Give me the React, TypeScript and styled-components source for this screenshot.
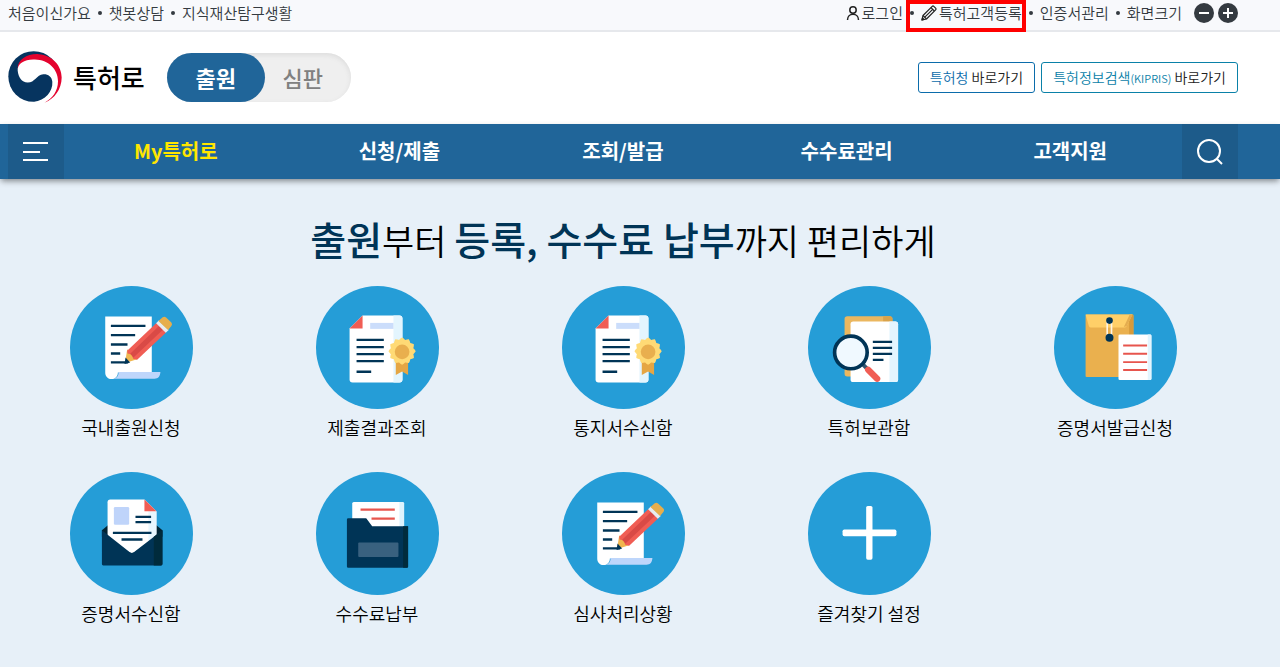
import React from "react";
import styled, { createGlobalStyle } from "styled-components";

const GlobalStyle = createGlobalStyle`
  *, *::before, *::after { box-sizing: border-box; }
  body {
    margin: 0;
    background: #fff;
    color: #111;
    font-family: "Noto Sans CJK KR", "Noto Sans", sans-serif;
  }
  ul { list-style: none; margin: 0; padding: 0; }
  a { color: inherit; text-decoration: none; }
  button { font-family: inherit; border: 0; padding: 0; cursor: pointer; }
  svg { display: block; flex: none; }
`;

const Container = styled.div`
  margin: 0 42px 0 8px;
  display: flex;
  align-items: center;
  justify-content: space-between;
`;

const TopBar = styled.div`
  background: #f8f9fc;
  border-bottom: 2px solid #e6e8ec;
`;

const TopRow = styled(Container)`
  height: 30px;
  padding-bottom: 4px;
  font-size: 15px;
  font-weight: 350;
  line-height: 24px;
  color: #343a40;
`;

const LinkList = styled.ul`
  display: flex;
  align-items: center;
`;

const LinkItem = styled.li`
  display: flex;
  align-items: center;
  white-space: nowrap;
  & + &::before {
    content: "";
    width: 4px;
    height: 4px;
    margin: 0 7px;
    border-radius: 50%;
    background: #343a40;
  }
`;

const TopLink = styled.a<{ $marked?: boolean }>`
  position: relative;
  display: flex;
  align-items: center;
  gap: 2px;
  ${(p) =>
    p.$marked &&
    `&::after {
      content: "";
      position: absolute;
      inset: -1px -4px -7px -15px;
      border: 4px solid #f00;
    }`}
`;

const SizeButtons = styled.div`
  display: flex;
  gap: 4px;
  margin-left: 12px;
`;

const RoundButton = styled.button`
  width: 20px;
  height: 20px;
  border-radius: 50%;
  background: #343a40;
  display: grid;
  place-items: center;
`;

const HeaderRow = styled(Container)`
  height: 92px;
  padding-bottom: 2px;
`;

const Brand = styled.div`
  display: flex;
  align-items: center;
`;

const LogoLink = styled.a`
  display: flex;
  align-items: center;
  gap: 11px;
  font-size: 26px;
  line-height: 36px;
  font-weight: 500;
  color: #000;
`;

const Toggle = styled.div`
  display: flex;
  margin-left: 22px;
  border-radius: 25px;
  background: #efefef;
  box-shadow: inset 0 2px 5px #dcdcdc;
`;

const ToggleButton = styled.button<{ $active?: boolean }>`
  width: ${(p) => (p.$active ? 98 : 86)}px;
  height: 49px;
  padding-right: ${(p) => (p.$active ? 0 : 10)}px;
  border-radius: 25px;
  font-size: 22px;
  line-height: 32px;
  font-weight: ${(p) => (p.$active ? 700 : 500)};
  color: ${(p) => (p.$active ? "#fff" : "#808080")};
  background: ${(p) => (p.$active ? "#206599" : "transparent")};
`;

const Shortcuts = styled.div`
  display: flex;
  gap: 6px;
`;

const Shortcut = styled.a<{ $color: string }>`
  height: 31px;
  padding: 0 11px;
  border: 1px solid ${(p) => p.$color};
  border-radius: 3px;
  font-size: 14px;
  line-height: 28px;
  font-weight: 350;
  color: #222;
  white-space: nowrap;
  span { color: ${(p) => p.$color}; }
  small { font-size: 11px; }
`;

const NavBar = styled.nav`
  position: relative;
  background: #206599;
  box-shadow: 0 3px 6px -1px rgba(0, 0, 0, 0.45);
`;

const NavRow = styled(Container)`
  height: 55px;
`;

const NavButton = styled.button`
  width: 56px;
  height: 55px;
  background: #1d5b8a;
  display: grid;
  place-items: center;
`;

const Menu = styled.ul`
  flex: 1;
  display: grid;
  grid-template-columns: repeat(5, 1fr);
  padding-bottom: 2px;
  text-align: center;
  font-size: 20px;
  line-height: 32px;
  font-weight: 700;
`;

const MenuLink = styled.a<{ $current?: boolean }>`
  color: ${(p) => (p.$current ? "#ffe600" : "#fff")};
`;

const Hero = styled.main`
  background: #e7f0f8;
  padding: 31px 42px 38px 8px;
`;

const Title = styled.h1`
  margin: 0 0 18px;
  text-align: center;
  font-size: 35px;
  line-height: 56px;
  font-weight: 350;
  color: #000;
  strong {
    font-size: 39px;
    font-weight: 500;
    color: #003456;
  }
`;

const Services = styled.ul`
  display: grid;
  grid-template-columns: repeat(5, 1fr);
  row-gap: 29px;
`;

const ServiceLink = styled.a`
  display: flex;
  flex-direction: column;
  align-items: center;
  gap: 2px;
  font-size: 18px;
  line-height: 32px;
  font-weight: 350;
  color: #000;
`;

const Circle = styled.span`
  width: 123px;
  height: 123px;
  border-radius: 50%;
  background: #259dd7;
`;

const Art = ({ children, top = 28 }: { children: React.ReactNode; top?: number }) => (
  <svg width="123" height="123" viewBox={`28 ${top} 370 370`} aria-hidden="true">
    {children}
  </svg>
);

const WriteIcon = () => (
  <Art>
    <path d="M134 120h140v168H172c0 12-8 20-19 20s-19-8-19-20z" fill="#fff" />
    <path d="M174 287h126c-1 13-6 20-18 20H160c10-3 15-10 14-20z" fill="#bed6fb" />
    <path d="M151 148h104M151 176h73M151 204h50M151 231h28M151 258h52" stroke="#003456" strokeWidth="7" />
    <path d="M200 218l17 17 13 13-36 12z" fill="#f0b64f" />
    <path d="M195 243l14 15-17 5z" fill="#003456" />
    <path d="M200 223l88-84 29 29-87 82-12-3-4-13-13-3z" fill="#f05d54" />
    <path d="M209 232l89-86 11 12-90 85z" fill="#d94a46" />
    <path d="M287 140l8-8 30 28-9 9z" fill="#e7ecef" />
    <path d="M294 133l13-11q5-4 10 1l16 15q4 5 0 10l-10 12z" fill="#e6ae4c" />
  </Art>
);

const sealPoints = Array.from({ length: 48 }, (_, i) => {
  const angle = (i * Math.PI) / 24;
  const radius = 38 + 3 * Math.cos(angle * 12);
  return `${(287 + radius * Math.cos(angle)).toFixed(1)},${(224 + radius * Math.sin(angle)).toFixed(1)}`;
}).join(" ");

const CertificateIcon = () => (
  <Art>
    <path d="M168 117h111q9 0 9 9v183q0 9-9 9H138q-9 0-9-9V156z" fill="#fff" />
    <path d="M261 117h18q9 0 9 9v183q0 9-9 9h-18z" fill="#e3f5fe" />
    <path d="M168 117v39h-39z" fill="#f05d54" />
    <path d="M191 139h70v18h-70z" fill="#cbddfb" />
    <path d="M150 190h82M150 212h82M150 233h82M150 254h82M150 286h44" stroke="#003456" strokeWidth="7" />
    <path d="M268 255h37v41l-18-11-19 11z" fill="#e5a644" />
    <polygon points={sealPoints} fill="#ffda75" />
    <circle cx="287" cy="226" r="22" fill="#e9af4e" />
  </Art>
);

const SearchDocIcon = () => (
  <Art>
    <rect x="138" y="119" width="144" height="181" rx="8" fill="#ebb75f" />
    <path d="M254 119h20q8 0 8 8v20h-28z" fill="#d9a34a" />
    <rect x="156" y="135" width="143" height="182" rx="8" fill="#fff" />
    <path d="M273 135h18q8 0 8 8v166q0 8-8 8h-18z" fill="#e3f5fe" />
    <path d="M223 196h58M223 214h58M223 232h58M223 250h32" stroke="#003456" strokeWidth="7" />
    <path d="M192 263l16 16" stroke="#34566f" strokeWidth="12" />
    <path d="M209 280l27 27" stroke="#f05d54" strokeWidth="19" strokeLinecap="round" />
    <circle cx="157" cy="228" r="49" fill="#f0f9ff" stroke="#003456" strokeWidth="11" />
  </Art>
);

const EnvelopeIcon = () => (
  <Art>
    <rect x="123" y="114" width="144" height="188" rx="3" fill="#eab04e" />
    <path d="M254 114h10q3 0 3 3v70h-13z" fill="#d69a3b" />
    <path d="M123 114h141l-18 36q-2 3-6 3H139q-4 0-6-4z" fill="#ffcf68" />
    <path d="M246 149l18-34h-9l-17 36z" fill="#e4ac4f" />
    <path d="M188 134v48M201 134v48" stroke="#fff5e4" strokeWidth="5" />
    <circle cx="195" cy="132" r="10" fill="#003456" />
    <circle cx="195" cy="184" r="12" fill="#003456" />
    <rect x="222" y="174" width="99" height="137" rx="4" fill="#fff" />
    <path d="M310 174h7q4 0 4 4v129q0 4-4 4h-7z" fill="#e3f5fe" />
    <path d="M236 207h72M236 232h72M236 257h72M236 281h72" stroke="#e7554d" strokeWidth="6" />
  </Art>
);

const MailIcon = () => (
  <Art top={17}>
    <path d="M124 192l18-15h146l18 15v20H124z" fill="#002333" />
    <path d="M149 100h103l36 35v75l-67 49q-7 5-14 0l-66-49V108q0-8 8-8z" fill="#fff" />
    <path d="M264 135h24v75l-24 18z" fill="#e8f6fe" />
    <path d="M252 100l36 35h-36z" fill="#f05d54" />
    <rect x="160" y="122" width="46" height="54" rx="4" fill="#bfd4fa" />
    <path d="M225 152h47M225 168h47M157 200h116M183 220h63" stroke="#003456" strokeWidth="7" />
    <path d="M124 192l83 66q7 5 14 0l85-66v102q0 4-4 4H128q-4 0-4-4z" fill="#003456" />
    <path d="M280 212l26-20v102q0 4-4 4h-22z" fill="#002b3c" />
  </Art>
);

const FolderIcon = () => (
  <Art top={17}>
    <rect x="137" y="107" width="156" height="90" rx="5" fill="#fff" />
    <path d="M279 107h9q5 0 5 5v75h-14z" fill="#def3fd" />
    <path d="M162 130h103M195 157h70" stroke="#e7554d" strokeWidth="7" />
    <path d="M125 156h54l18 24h108v121q0 4-4 4H125q-4 0-4-4V160q0-4 4-4z" fill="#003456" />
    <path d="M290 180h15v121q0 4-4 4h-11z" fill="#002b3c" />
    <rect x="155" y="229" width="121" height="44" rx="3" fill="#39617f" />
  </Art>
);

const PlusArt = () => (
  <Art top={17}>
    <rect x="132" y="190" width="162" height="20" rx="5" fill="#fff" />
    <rect x="203" y="119" width="19" height="162" rx="5" fill="#fff" />
  </Art>
);

const Logo = () => (
  <svg width="54" height="52" viewBox="23 156 162 155" aria-hidden="true">
    <circle cx="100" cy="232" r="76" fill="#06345f" />
    <path d="M150 162C174 178 186 204 184 236C182 268 162 298 134 309L180 309V162Z" fill="#fff" />
    <path d="M52 208C52 180 82 163 115 165C157 168 184 200 184 235C184 270 162 300 133 310C154 290 172 250 160 215L110 185Z" fill="#e4032e" />
    <path d="M52 214C50 192 76 179 104 181C144 182 173 210 173 246C173 275 157 297 133 310L100 309C135 303 158 278 156 248C155 232 142 224 129 225C108 227 104 250 82 250C64 250 54 234 52 214Z" fill="#fff" />
  </svg>
);

const UserIcon = () => (
  <svg width="14" height="16" viewBox="0 0 14 16" fill="none" stroke="#222" strokeWidth="1.5" aria-hidden="true">
    <circle cx="7" cy="5" r="3.2" />
    <path d="M1.5 15C1.5 11.5 4 9.3 7 9.3S12.500 11.500 12.500 15" />
  </svg>
);

const PencilIcon = () => (
  <svg width="16" height="16" viewBox="0 0 16 16" fill="none" stroke="#222" strokeWidth="1.2" strokeLinejoin="round" aria-hidden="true">
    <path d="M1 15l1-4.500L11.200 1.400q.8-.8 1.600 0l1.800 1.800q.8.8 0 1.600L5.500 14z" />
    <path d="M2 10.500L5.500 14M10 2.600L13.400 6M3.800 12.200L11.700 4.300" />
    <path d="M1 15l.5-2 1.500 1.500z" fill="#222" />
  </svg>
);

const services = [
  { label: "국내출원신청", Icon: WriteIcon },
  { label: "제출결과조회", Icon: CertificateIcon },
  { label: "통지서수신함", Icon: CertificateIcon },
  { label: "특허보관함", Icon: SearchDocIcon },
  { label: "증명서발급신청", Icon: EnvelopeIcon },
  { label: "증명서수신함", Icon: MailIcon },
  { label: "수수료납부", Icon: FolderIcon },
  { label: "심사처리상황", Icon: WriteIcon },
  { label: "즐겨찾기 설정", Icon: PlusArt },
];

const menu = ["My특허로", "신청/제출", "조회/발급", "수수료관리", "고객지원"];

export default function App() {
  return (
    <>
      <GlobalStyle />
      <TopBar>
        <TopRow>
          <LinkList>
            {["처음이신가요", "챗봇상담", "지식재산탐구생활"].map((text) => (
              <LinkItem key={text}>
                <TopLink href="#">{text}</TopLink>
              </LinkItem>
            ))}
          </LinkList>
          <LinkList>
            <LinkItem>
              <TopLink href="#"><UserIcon />로그인</TopLink>
            </LinkItem>
            <LinkItem>
              <TopLink href="#" $marked><PencilIcon />특허고객등록</TopLink>
            </LinkItem>
            <LinkItem>
              <TopLink href="#">인증서관리</TopLink>
            </LinkItem>
            <LinkItem>
              화면크기
              <SizeButtons>
                <RoundButton type="button" aria-label="화면 축소">
                  <svg width="12" height="12" viewBox="0 0 12 12" stroke="#fff" strokeWidth="2"><path d="M1 6h10" /></svg>
                </RoundButton>
                <RoundButton type="button" aria-label="화면 확대">
                  <svg width="12" height="12" viewBox="0 0 12 12" stroke="#fff" strokeWidth="2"><path d="M1 6h10M6 1v10" /></svg>
                </RoundButton>
              </SizeButtons>
            </LinkItem>
          </LinkList>
        </TopRow>
      </TopBar>
      <header>
        <HeaderRow>
          <Brand>
            <LogoLink href="#"><Logo />특허로</LogoLink>
            <Toggle>
              <ToggleButton type="button" $active>출원</ToggleButton>
              <ToggleButton type="button">심판</ToggleButton>
            </Toggle>
          </Brand>
          <Shortcuts>
            <Shortcut href="#" $color="#0b6cab"><span>특허청</span> 바로가기</Shortcut>
            <Shortcut href="#" $color="#0a81a8"><span>특허정보검색<small>(KIPRIS)</small></span> 바로가기</Shortcut>
          </Shortcuts>
        </HeaderRow>
        <NavBar>
          <NavRow>
            <NavButton type="button" aria-label="전체메뉴">
              <svg width="26" height="20" viewBox="0 0 26 20" stroke="#fff" strokeWidth="2"><path d="M0 1h25M0 10h17M0 18h25" /></svg>
            </NavButton>
            <Menu>
              {menu.map((text, i) => (
                <li key={text}><MenuLink href="#" $current={i === 0}>{text}</MenuLink></li>
              ))}
            </Menu>
            <NavButton type="button" aria-label="검색">
              <svg width="28" height="28" viewBox="0 0 28 28" fill="none" stroke="#fff" strokeWidth="2"><circle cx="13" cy="13" r="11" /><path d="M20.500 20.500L26 26" /></svg>
            </NavButton>
          </NavRow>
        </NavBar>
      </header>
      <Hero>
        <Title>
          <strong>출원</strong>부터 <strong>등록, 수수료 납부</strong>까지 편리하게
        </Title>
        <Services>
          {services.map(({ label, Icon }) => (
            <li key={label}>
              <ServiceLink href="#">
                <Circle><Icon /></Circle>
                {label}
              </ServiceLink>
            </li>
          ))}
        </Services>
      </Hero>
    </>
  );
}
